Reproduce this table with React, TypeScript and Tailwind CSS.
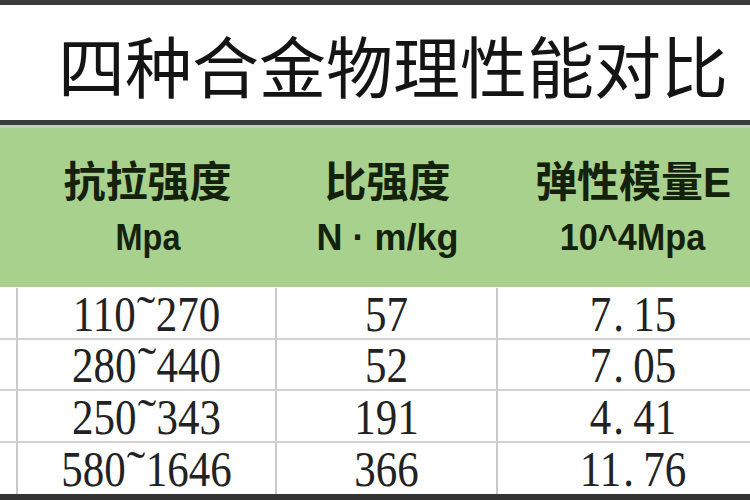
const rows = [
  ["110", "270", "57", "7.15"],
  ["280", "440", "52", "7.05"],
  ["250", "343", "191", "4.41"],
  ["580", "1646", "366", "11.76"],
];

// SimSun-like look: the period takes a half-width cell
const Num = ({ value }: { value: string }) => {
  const [a, b] = value.split(".");
  return (
    <span className="inline-block scale-y-120">
      {a}
      {b !== undefined && (
        <>
          <span className="inline-block w-[22px] text-left pl-[2px]">.</span>
          {b}
        </>
      )}
    </span>
  );
};

const Range = ({ from, to }: { from: string; to: string }) => (
  <span className="inline-block scale-y-120">
    {from}
    <span className="inline-block w-[20px] text-center scale-x-130">˜</span>
    {to}
  </span>
);

const App = () => {
  return (
    <div className="w-[750px] h-[500px] overflow-hidden bg-white flex flex-col">
      <div className="h-[5px] shrink-0 bg-[#3a3a3a]" />

      <div className="h-[115px] shrink-0 flex items-center pl-[58px] pt-[2px]">
        <h1 className="text-[67px] leading-none whitespace-nowrap text-[#141414] font-['Noto_Sans_CJK_SC',sans-serif] font-normal">
          四种合金物理性能对比
        </h1>
      </div>

      <div className="h-[5px] shrink-0 bg-[#3a3a3a]" />
      <div className="h-[3px] shrink-0 bg-[#c4cdbf]" />

      <div className="h-[159px] shrink-0 bg-[#a9d18e] grid grid-cols-[18px_259px_221px_270px] text-[#14220d] font-['Liberation_Sans','Noto_Sans_CJK_SC',sans-serif] font-bold pt-[4px]">
        <div />
        <div className="flex flex-col items-center justify-center">
          <span className="text-[42px] leading-[55px]">抗拉强度</span>
          <span className="text-[36px] leading-[55px] scale-x-90">Mpa</span>
        </div>
        <div className="flex flex-col items-center justify-center">
          <span className="text-[42px] leading-[55px]">比强度</span>
          <span className="text-[36px] leading-[55px] whitespace-nowrap">N · m/kg</span>
        </div>
        <div className="flex flex-col items-center justify-center">
          <span className="text-[42px] leading-[55px] whitespace-nowrap">弹性模量E</span>
          <span className="text-[36px] leading-[55px] whitespace-nowrap scale-x-95">10^4Mpa</span>
        </div>
      </div>

      <div className="flex-1 flex flex-col font-['Liberation_Serif',serif] text-[43px] text-[#222222]">
        {rows.map((r, i) => (
          <div
            key={i}
            className={`grid grid-cols-[18px_259px_221px_270px] ${
              i === 0 ? "h-[53px] pt-[1px]" : i === 2 ? "h-[52px]" : "h-[51px]"
            } ${i < 3 ? "border-b-2 border-[#d2d2d2]" : ""}`}
          >
            <div className="border-r-2 border-[#cacaca]" />
            <div className="border-r-2 border-[#cacaca] flex items-center justify-center leading-none">
              <Range from={r[0]} to={r[1]} />
            </div>
            <div className="border-r-2 border-[#cacaca] flex items-center justify-center leading-none">
              <Num value={r[2]} />
            </div>
            <div className="flex items-center justify-center leading-none">
              <Num value={r[3]} />
            </div>
          </div>
        ))}
      </div>

      <div className="h-[6px] shrink-0 bg-[#333333]" />
    </div>
  );
};

export default App;
